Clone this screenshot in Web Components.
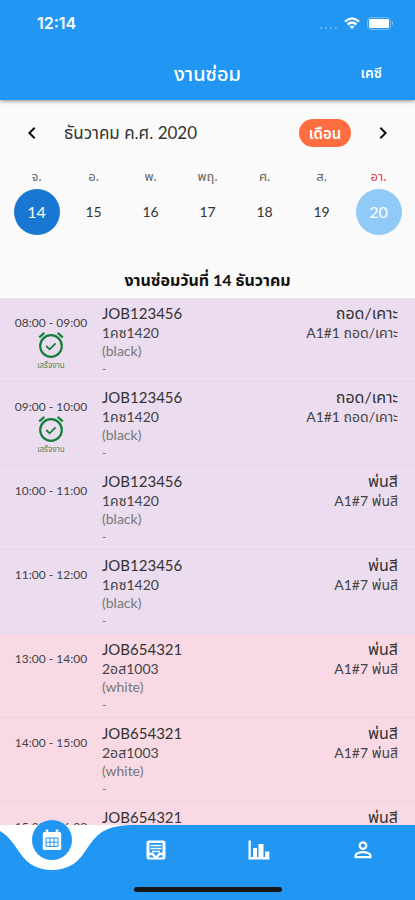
<!DOCTYPE html>
<html lang="th">
<head>
<meta charset="utf-8">
<meta name="viewport" content="width=device-width, initial-scale=1">
<title>งานซ่อม</title>
<style>
html, body { margin: 0; height: 100%; }
body { font-family: Lato, "Noto Sans Thai", "Noto Sans", sans-serif; background: #fafafa; color: #333; }
</style>
</head>
<body>
<repair-app></repair-app>
<script>
const define = (name, css, html) => customElements.define(name, class extends HTMLElement {
  connectedCallback() {
    if (this.shadowRoot) return;
    const body = typeof html === 'function' ? html(this) : html;
    this.attachShadow({ mode: 'open' }).innerHTML = '<style>*{box-sizing:border-box}button{font:inherit;color:inherit;border:0;background:none;padding:0;cursor:pointer}' + css + '</style>' + body;
  }
});

define('status-bar', `
:host { display: flex; justify-content: space-between; align-items: center; height: 46px; padding: 0 21px 0 37px; color: #fff; }
time { font: 600 16px/20px Inter, sans-serif; }
.icons { display: flex; align-items: center; gap: 7px; }
.dots { align-self: end; }
`, `<time>12:14</time>
<span class="icons">
<svg class="dots" width="18" height="4" viewBox="0 0 18 4" fill="#fff" opacity=".35"><circle cx="2" cy="2" r="1.1"/><circle cx="7" cy="2" r="1.1"/><circle cx="12" cy="2" r="1.1"/><circle cx="16.8" cy="2" r="1.1"/></svg>
<svg width="16" height="13" viewBox="0 0 16 13" fill="none" stroke="#fff" stroke-width="2.3"><path d="M1 4.6Q8-1.9 15 4.6"/><path d="M3.7 7.6Q8 3.5 12.3 7.6"/><path d="M8 12.3 5.5 9.6Q8 7.6 10.5 9.6Z" fill="#fff" stroke="none"/></svg>
<svg width="27" height="13" viewBox="0 0 27 13"><rect x=".5" y=".5" width="23" height="12" rx="3.5" fill="none" stroke="#fff" stroke-opacity=".35"/><rect x="2" y="2" width="20" height="9" rx="1.5" fill="#fff"/><path d="M25 4.5q2 2 0 4z" fill="#fff" opacity=".5"/></svg>
</span>`);

define('app-header', `
:host { display: block; position: relative; z-index: 1; background: #2196f3; color: #fff; box-shadow: 0 1px 4px #0007; }
.bar { display: grid; grid-template-columns: 1fr auto 1fr; align-items: center; height: 54px; padding: 0 33px; }
h1 { grid-column: 2; margin: 0; font-size: 20px; line-height: 28px; font-weight: 500; }
button { justify-self: end; font-size: 14px; line-height: 24px; font-weight: 600; }
`, `<status-bar></status-bar><div class="bar"><h1><slot></slot></h1><button>เคซี</button></div>`);

define('calendar-day', `
:host { display: flex; flex-direction: column; align-items: center; font-size: 14px; color: #333; }
span { font-size: 13px; line-height: 20px; color: #666; margin-bottom: 3px; }
button { width: 46px; height: 46px; border-radius: 50%; line-height: 20px; }
:host([weekend]) span { color: #e53935; }
:host([selected]) button, :host([today]) button { color: #fff; font-size: 16px; }
:host([selected]) button { background: #1976d2; }
:host([today]) button { background: #90caf9; }
`, el => `<span>${el.getAttribute('name')}</span><button><slot></slot></button>`);

define('week-calendar', `
:host { display: block; padding: 17px 8px 0; }
.head { display: flex; align-items: center; height: 32px; padding: 0 12px; }
h2 { flex: 1; margin: 0 0 0 20px; font-size: 17px; line-height: 28px; font-weight: 400; }
.arrow { width: 24px; height: 24px; }
svg { display: block; }
.mode { background: #ff6e40; color: #fff; border-radius: 14px; height: 28px; width: 52px; font-size: 15px; font-weight: 600; line-height: 28px; margin-right: 20px; }
.days { display: grid; grid-template-columns: repeat(7, 1fr); padding-top: 17px; }
`, `<div class="head">
<button class="arrow" aria-label="ก่อนหน้า"><svg width="24" height="24" fill="none" stroke="#111" stroke-width="2"><path d="M14.7 6.7 9.4 12l5.3 5.3"/></svg></button>
<h2>ธันวาคม ค.ศ. 2020</h2><button class="mode">เดือน</button>
<button class="arrow" aria-label="ถัดไป"><svg width="24" height="24" fill="none" stroke="#111" stroke-width="2"><path d="m9.3 6.7 5.3 5.3-5.3 5.3"/></svg></button></div>
<div class="days">
<calendar-day name="จ." selected>14</calendar-day><calendar-day name="อ.">15</calendar-day><calendar-day name="พ.">16</calendar-day><calendar-day name="พฤ.">17</calendar-day><calendar-day name="ศ.">18</calendar-day><calendar-day name="ส.">19</calendar-day><calendar-day name="อา." weekend today>20</calendar-day>
</div>`);

define('job-row', `
:host { display: grid; grid-template-columns: 102px 1fr auto; height: 84px; padding: 5px 17px 0 0; background: #ebdcef; border: solid #e5d5e9; border-width: 0 0 1px; }
:host([tone=pink]) { background: #f9d9e4; border-color: #f2cfdc; }
.when { display: flex; flex-direction: column; align-items: center; padding-top: 12px; font-size: 12px; line-height: 16px; color: #444; }
.done { display: flex; flex-direction: column; align-items: center; font-size: 8px; line-height: 12px; color: #4f8a5a; }
svg { display: block; }
div > p { margin: 0; white-space: nowrap; }
.a { font-size: 15px; line-height: 20px; color: #333; }
.type .a { font-size: 16px; }
.b { font-size: 14px; line-height: 20px; color: #444; }
.c { font-size: 14px; line-height: 16px; color: #777; }
.d { font-size: 12px; line-height: 20px; color: #777; }
.type { text-align: right; }
`, el => { const g = n => el.getAttribute(n); return `
<div class="when"><time>${g('time')}</time>${el.hasAttribute('done') ? `<span class="done"><svg width="28" height="28" viewBox="0 0 28 28" fill="none" stroke="#15803d" stroke-width="2.2"><circle cx="14" cy="15" r="10.8"/><path d="m2.2 6.3 5.2-4.4M25.8 6.3l-5.2-4.4"/><path d="m9.3 15 3.3 3.3 6-6" stroke-width="1.8"/></svg>เสร็จงาน</span>` : ''}</div>
<div><p class="a">${g('job')}</p><p class="b">${g('plate')}</p><p class="c">${g('color')}</p><p class="d">-</p></div>
<div class="type"><p class="a">${g('type')}</p><p class="b">${g('bay')} ${g('type')}</p></div>`; });

define('job-list', `
:host { display: flex; flex-direction: column; flex: 1; min-height: 0; }
h2 { margin: 0; padding: 31px 0 4px; font-size: 16px; line-height: 28px; font-weight: 700; text-align: center; color: #111; }
.rows { flex: 1; min-height: 0; overflow-y: auto; scrollbar-width: none; }
`, () => { const B = 'job="JOB123456" plate="1คซ1420" color="(black)"', W = 'tone="pink" job="JOB654321" plate="2อส1003" color="(white)" type="พ่นสี" bay="A1#7"';
return `<h2>งานซ่อมวันที่ 14 ธันวาคม</h2><div class="rows">
<job-row time="08:00 - 09:00" ${B} type="ถอด/เคาะ" bay="A1#1" done></job-row>
<job-row time="09:00 - 10:00" ${B} type="ถอด/เคาะ" bay="A1#1" done></job-row>
<job-row time="10:00 - 11:00" ${B} type="พ่นสี" bay="A1#7"></job-row>
<job-row time="11:00 - 12:00" ${B} type="พ่นสี" bay="A1#7"></job-row>
<job-row time="13:00 - 14:00" ${W}></job-row>
<job-row time="14:00 - 15:00" ${W}></job-row>
<job-row time="15:00 - 16:00" ${W}></job-row></div>`; });

define('nav-bar', `
:host { display: block; position: relative; background: #2196f3; height: 75px; overflow: clip; overflow-clip-margin: 8px; }
nav { display: grid; grid-template-columns: repeat(4, 1fr); height: 50px; }
button { position: relative; display: grid; place-items: center; }
svg { display: block; }
.notch { position: absolute; top: 0; left: 50%; transform: translateX(-50%); }
.dot { position: absolute; top: -5px; left: 50%; transform: translateX(-50%); width: 40px; height: 40px; border-radius: 50%; background: #2196f3; display: grid; place-items: center; }
.home { width: 148px; height: 5px; border-radius: 3px; background: #161616; margin: 12px auto 0; }
`, `<nav>
<button aria-label="ปฏิทิน"><svg class="notch" width="160" height="46" viewBox="0 0 160 46" fill="#fff"><path d="M0 0H160C128 0 122 14 112 28C104 40 93 45 80 45S56 40 48 28C38 14 32 0 0 0Z"/></svg>
<span class="dot"><svg width="24" height="24" viewBox="0 0 24 24" fill="none" stroke="#fff"><rect x="2.8" y="4" width="18.4" height="18" rx="1.5" fill="#fff" stroke="none"/><path d="M7 1.5v5M17 1.5v5" stroke-width="2.5"/><path d="M6 10h12v8.5H6zM10 10v8.5M14 10v8.5M6 14.2h12" stroke="#2196f3" stroke-width="1"/></svg></span></button>
<button aria-label="รายการ"><svg width="24" height="24" viewBox="0 0 24 24"><rect x="2.5" y="2.5" width="19" height="19" rx="2.5" fill="#fff"/><path d="M5.5 5h13v9.5H15L12 18l-3-3.5H5.5Z" fill="#2196f3"/><path d="M6.5 7.5h11M6.5 10.5h11M8 13.5h8" stroke="#fff" stroke-width="1.5"/><path d="M5.5 17.2h2.7q1 2 2.3 2.3h-5ZM18.5 17.2h-2.7q-1 2-2.3 2.3h5Z" fill="#2196f3"/></svg></button>
<button aria-label="สถิติ"><svg width="24" height="24" viewBox="0 0 24 24" fill="#fff"><path d="M1.5 2.5h2.3V19h18.7v2.5h-21zM6 10h4v9H6zM11.5 6h5v13h-5zM18.2 13.5h4.1v6h-4.1z"/></svg></button>
<button aria-label="โปรไฟล์"><svg width="24" height="24" viewBox="0 0 24 24" fill="none" stroke="#fff" stroke-width="2.2"><circle cx="12" cy="7.6" r="3.3"/><path d="M4.6 19.2v-1.6c0-2.2 4.4-3.4 7.4-3.4s7.4 1.2 7.4 3.4v1.6Z"/></svg></button>
</nav><div class="home"></div>`);

define('repair-app', `
:host { display: flex; flex-direction: column; height: 100vh; }
`, `<app-header>งานซ่อม</app-header><week-calendar></week-calendar><job-list></job-list><nav-bar></nav-bar>`);
</script>
</body>
</html>
